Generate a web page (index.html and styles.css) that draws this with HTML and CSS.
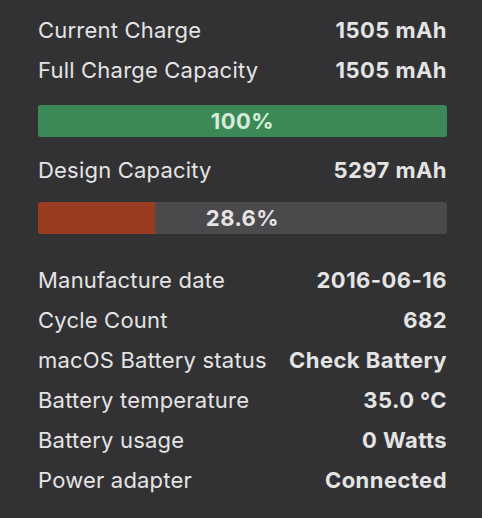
FILE: index.html
```html
<!DOCTYPE html>
<html>
<head>
<meta charset="utf-8">
<link rel="stylesheet" href="styles.css">
</head>
<body>
<div class="panel">
  <div class="row"><span class="label">Current Charge</span><span class="value">1505 mAh</span></div>
  <div class="row"><span class="label">Full Charge Capacity</span><span class="value">1505 mAh</span></div>
  <div class="bar bar-charge">
    <div class="fill fill-green" style="width:100%"></div>
    <span class="bar-text">100%</span>
  </div>
  <div class="row"><span class="label">Design Capacity</span><span class="value">5297 mAh</span></div>
  <div class="bar bar-design">
    <div class="fill fill-red" style="width:28.6%"></div>
    <span class="bar-text">28.6%</span>
  </div>
  <div class="row"><span class="label">Manufacture date</span><span class="value">2016-06-16</span></div>
  <div class="row"><span class="label">Cycle Count</span><span class="value">682</span></div>
  <div class="row"><span class="label">macOS Battery status</span><span class="value">Check Battery</span></div>
  <div class="row"><span class="label">Battery temperature</span><span class="value">35.0 °C</span></div>
  <div class="row"><span class="label">Battery usage</span><span class="value">0 Watts</span></div>
  <div class="row"><span class="label">Power adapter</span><span class="value">Connected</span></div>
</div>
</body>
</html>
```

FILE: styles.css
```css
html, body {
  margin: 0;
  padding: 0;
  background: #323234;
}
body {
  width: 482px;
  height: 518px;
  overflow: hidden;
  font-family: "Inter", "Liberation Sans", sans-serif;
  color: #e4e4e4;
}
.panel {
  padding: 10px 35px 0 38px;
  display: flex;
  flex-direction: column;
}
.row {
  height: 40px;
  display: flex;
  align-items: center;
  justify-content: space-between;
  font-size: 22px;
}
.label {
  font-weight: 400;
  letter-spacing: 0.2px;
}
.value {
  font-weight: 700;
  letter-spacing: 0.45px;
}
.bar {
  position: relative;
  height: 32px;
  border-radius: 3px;
  background: #4a4a4c;
  overflow: hidden;
  display: flex;
  align-items: center;
  justify-content: center;
}
.bar-charge {
  margin: 15px 0 13px;
}
.bar-design {
  margin: 12px 0 26px;
}
.fill {
  position: absolute;
  left: 0;
  top: 0;
  bottom: 0;
}
.fill-green { background: #3b8956; }
.fill-red { background: #993c1f; }
.bar-text {
  position: relative;
  font-size: 22px;
  font-weight: 700;
  letter-spacing: 0.45px;
  color: #e4e4e4;
}
.bar-charge .bar-text { color: #d6ecda; }
```
